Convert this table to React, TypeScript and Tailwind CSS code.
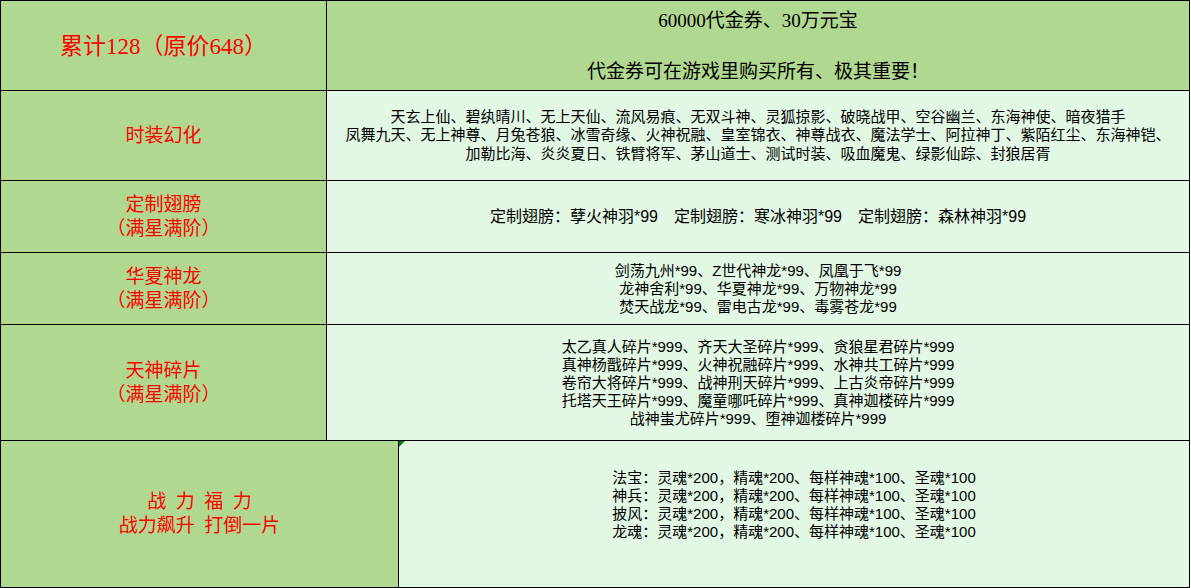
const serif = { fontFamily: '"Liberation Serif", "Noto Sans CJK SC", serif' };
const sans = { fontFamily: '"Liberation Sans", "Noto Sans CJK SC", sans-serif' };

function LeftCell({ lines, wide }: { lines: string[]; wide?: boolean }) {
  return (
    <div
      className={`${wide ? "w-[398px]" : "w-[326px]"} shrink-0 border-r border-black bg-[#b0d890] flex flex-col items-center justify-center text-[19px] leading-[24px] text-[#ff0000]`}
      style={serif}
    >
      {lines.map((l, i) => (
        <div key={i} className="whitespace-pre">
          {l}
        </div>
      ))}
    </div>
  );
}

function RightCell({ lines, lh = "leading-[18px]" }: { lines: string[]; lh?: string }) {
  return (
    <div
      className={`flex-1 border-r border-black bg-[#e2f7e4] flex flex-col items-center justify-center text-[15px] ${lh} text-black`}
      style={sans}
    >
      {lines.map((l, i) => (
        <div key={i} className="whitespace-pre">
          {l}
        </div>
      ))}
    </div>
  );
}

export default function App() {
  return (
    <div className="w-[1190px] h-[588px] border-t border-l border-black bg-white flex flex-col overflow-hidden">
      {/* 累计 */}
      <div className="flex h-[90px] shrink-0 border-b border-black">
        <div
          className="w-[326px] shrink-0 border-r border-black bg-[#b0d890] flex items-center justify-center pt-[3px] text-[23px] text-[#ff0000]"
          style={serif}
        >
          累计128（原价648）
        </div>
        <div
          className="flex-1 border-r border-black bg-[#b0d890] flex flex-col items-center justify-center pt-[2px] text-[19px] leading-[25.5px] text-black"
          style={serif}
        >
          <div>60000代金券、30万元宝</div>
          <div>&nbsp;</div>
          <div>代金券可在游戏里购买所有、极其重要！</div>
        </div>
      </div>

      {/* 时装幻化 */}
      <div className="flex h-[90px] shrink-0 border-b border-black">
        <LeftCell lines={["时装幻化"]} />
        <RightCell
          lh="leading-[18.5px]"
          lines={[
            "天玄上仙、碧纨晴川、无上天仙、流风易痕、无双斗神、灵狐掠影、破晓战甲、空谷幽兰、东海神使、暗夜猎手",
            "凤舞九天、无上神尊、月兔苍狼、冰雪奇缘、火神祝融、皇室锦衣、神尊战衣、魔法学士、阿拉神丁、紫陌红尘、东海神铠、",
            "加勒比海、炎炎夏日、铁臂将军、茅山道士、测试时装、吸血魔鬼、绿影仙踪、封狼居胥",
          ]}
        />
      </div>

      {/* 定制翅膀 */}
      <div className="flex h-[72px] shrink-0 border-b border-black">
        <LeftCell lines={["定制翅膀", "（满星满阶）"]} />
        <div
          className="flex-1 border-r border-black bg-[#e2f7e4] flex items-center justify-center gap-[16px] text-[16px] text-black"
          style={sans}
        >
          <span>定制翅膀：孽火神羽*99</span>
          <span>定制翅膀：寒冰神羽*99</span>
          <span>定制翅膀：森林神羽*99</span>
        </div>
      </div>

      {/* 华夏神龙 */}
      <div className="flex h-[72px] shrink-0 border-b border-black">
        <LeftCell lines={["华夏神龙", "（满星满阶）"]} />
        <RightCell
          lines={[
            "剑荡九州*99、Z世代神龙*99、凤凰于飞*99",
            "龙神舍利*99、华夏神龙*99、万物神龙*99",
            "焚天战龙*99、雷电古龙*99、毒雾苍龙*99",
          ]}
        />
      </div>

      {/* 天神碎片 */}
      <div className="flex h-[116px] shrink-0 border-b border-black">
        <LeftCell lines={["天神碎片", "（满星满阶）"]} />
        <RightCell
          lines={[
            "太乙真人碎片*999、齐天大圣碎片*999、贪狼星君碎片*999",
            "真神杨戬碎片*999、火神祝融碎片*999、水神共工碎片*999",
            "卷帘大将碎片*999、战神刑天碎片*999、上古炎帝碎片*999",
            "托塔天王碎片*999、魔童哪吒碎片*999、真神迦楼碎片*999",
            "战神蚩尤碎片*999、堕神迦楼碎片*999",
          ]}
        />
      </div>

      {/* 战力福力 */}
      <div className="flex h-[147px] shrink-0 border-b border-black">
        <LeftCell wide lines={["战\u2002力\u2002福\u2002力", "战力飙升\u2002打倒一片"]} />
        <div className="relative flex-1 flex">
          <svg className="absolute left-0 top-0" width="6" height="6" viewBox="0 0 6 6">
            <polygon points="0,0 6,0 0,6" fill="#0b7a14" />
          </svg>
          <RightCell
            lines={[
              "法宝：灵魂*200，精魂*200、每样神魂*100、圣魂*100",
              "神兵：灵魂*200，精魂*200、每样神魂*100、圣魂*100",
              "披风：灵魂*200，精魂*200、每样神魂*100、圣魂*100",
              "龙魂：灵魂*200，精魂*200、每样神魂*100、圣魂*100",
              "\u00a0",
            ]}
          />
        </div>
      </div>
    </div>
  );
}
